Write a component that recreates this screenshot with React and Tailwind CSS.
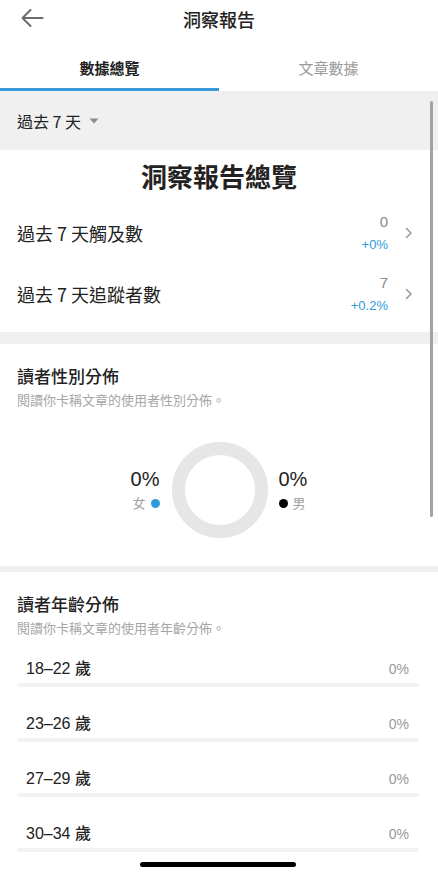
import React from "react";

const font = { fontFamily: '"Noto Sans CJK TC", "Noto Sans", sans-serif' };
const latin = { fontFamily: '"Liberation Sans", "Noto Sans CJK TC", sans-serif' };

function Chevron() {
  return (
    <svg width="8" height="12" viewBox="0 0 8 12" fill="none">
      <path d="M1.5 1.5 L6 6 L1.5 10.5" stroke="#9a9a9a" strokeWidth="1.6" strokeLinecap="round" strokeLinejoin="round" />
    </svg>
  );
}

function StatRow({ label, value, delta }) {
  return (
    <div className="flex items-center h-[61px] pl-[17px] pr-[25px]">
      <div className="flex-1 text-[18px] text-[#222] leading-[22px]">{label}</div>
      <div className="flex flex-col items-end mr-[17px] mt-[1px]">
        <div className="text-[15px] leading-[18px] text-[#8a8a8a]" style={latin}>{value}</div>
        <div className="text-[13px] leading-[18px] text-[#2e9bd9] mt-[5px]" style={latin}>{delta}</div>
      </div>
      <Chevron />
    </div>
  );
}

function AgeRow({ label }) {
  return (
    <div className="pl-[17px] pr-[19px] pb-[27px]">
      <div className="flex items-center justify-between h-[20px] pl-[9px] pr-[10px]">
        <span className="text-[16px] text-[#222] font-medium" style={latin}>{label}</span>
        <span className="text-[14px] text-[#999]" style={latin}>0%</span>
      </div>
      <div className="mt-[4px] h-[4px] rounded-full bg-[#f2f2f2]" />
    </div>
  );
}

export default function App() {
  return (
    <div className="relative w-[438px] h-[876px] overflow-hidden bg-white" style={font}>
      {/* Header */}
      <div className="relative h-[38px] flex items-center justify-center">
        <svg className="absolute left-[20px] top-[8px]" width="24" height="20" viewBox="0 0 24 20" fill="none">
          <path d="M22.5 10 H2.5 M10.5 2 L2.5 10 L10.5 18" stroke="#6b6b6b" strokeWidth="2" strokeLinecap="round" strokeLinejoin="round" />
        </svg>
        <div className="text-[18px] font-medium text-[#222] leading-[22px]">洞察報告</div>
      </div>

      {/* Tabs */}
      <div className="flex h-[53px]">
        <div className="flex-1 flex flex-col items-center">
          <div className="pt-[20px] h-[50px] text-[15px] font-bold text-[#222] leading-[20px]">數據總覽</div>
          <div className="w-full h-[3px] bg-[#3a9ad9]" />
        </div>
        <div className="flex-1 flex flex-col items-center">
          <div className="pt-[20px] h-[50px] text-[15px] text-[#9a9a9a] leading-[20px]">文章數據</div>
        </div>
      </div>

      {/* Filter band */}
      <div className="h-[59px] bg-[#f0f0f0] flex items-center pl-[17px]">
        <span className="text-[16px] text-[#222]">過去 7 天</span>
        <svg className="ml-[8px]" width="10" height="6" viewBox="0 0 10 6">
          <path d="M0.5 0.5 H9.5 L5 5.5 Z" fill="#8c8c8c" />
        </svg>
      </div>

      {/* Overview */}
      <div className="bg-white pt-[11px] pb-[8px]">
        <div className="text-center text-[26px] font-bold text-[#222] leading-[30px]">洞察報告總覽</div>
        <div className="mt-[11px]">
          <StatRow label="過去 7 天觸及數" value="0" delta="+0%" />
          <StatRow label="過去 7 天追蹤者數" value="7" delta="+0.2%" />
        </div>
      </div>

      <div className="h-[12px] bg-[#f0f0f0]" />

      {/* Gender */}
      <div className="bg-white h-[222px] px-[17px] pt-[21px]">
        <div className="text-[17px] font-medium text-[#222] leading-[22px]">讀者性別分佈</div>
        <div className="text-[13px] text-[#a6a6a6] leading-[18px] mt-[4px]">閱讀你卡稱文章的使用者性別分佈。</div>
        <div className="flex items-center justify-center mt-[33px]">
          <div className="flex flex-col items-end mr-[12px]">
            <div className="text-[20px] text-[#222] leading-[22px]" style={latin}>0%</div>
            <div className="flex items-center mt-[4px]">
              <span className="text-[13px] text-[#a0a0a0] leading-[18px]">女</span>
              <span className="ml-[5px] w-[9px] h-[9px] rounded-full bg-[#2e9bd9]" />
            </div>
          </div>
          <div className="w-[96px] h-[96px] rounded-full border-[13px] border-[#e6e6e6]" />
          <div className="flex flex-col items-start ml-[11px]">
            <div className="text-[20px] text-[#222] leading-[22px]" style={latin}>0%</div>
            <div className="flex items-center mt-[4px]">
              <span className="w-[9px] h-[9px] rounded-full bg-black" />
              <span className="ml-[5px] text-[13px] text-[#a0a0a0] leading-[18px]">男</span>
            </div>
          </div>
        </div>
      </div>

      <div className="h-[6px] bg-[#f0f0f0]" />

      {/* Age */}
      <div className="bg-white pt-[21px]">
        <div className="px-[17px]">
          <div className="text-[17px] font-medium text-[#222] leading-[22px]">讀者年齡分佈</div>
          <div className="text-[13px] text-[#a6a6a6] leading-[18px] mt-[4px]">閱讀你卡稱文章的使用者年齡分佈。</div>
        </div>
        <div className="mt-[22px]">
          <AgeRow label="18–22 歲" />
          <AgeRow label="23–26 歲" />
          <AgeRow label="27–29 歲" />
          <AgeRow label="30–34 歲" />
        </div>
      </div>

      {/* Scroll indicator */}
      <div className="absolute left-[430px] top-[101px] w-[3px] h-[416px] rounded-full bg-[#a3a3a3]" />
      {/* Home indicator */}
      <div className="absolute left-[140px] top-[862px] w-[156px] h-[5px] rounded-full bg-black" />
    </div>
  );
}
